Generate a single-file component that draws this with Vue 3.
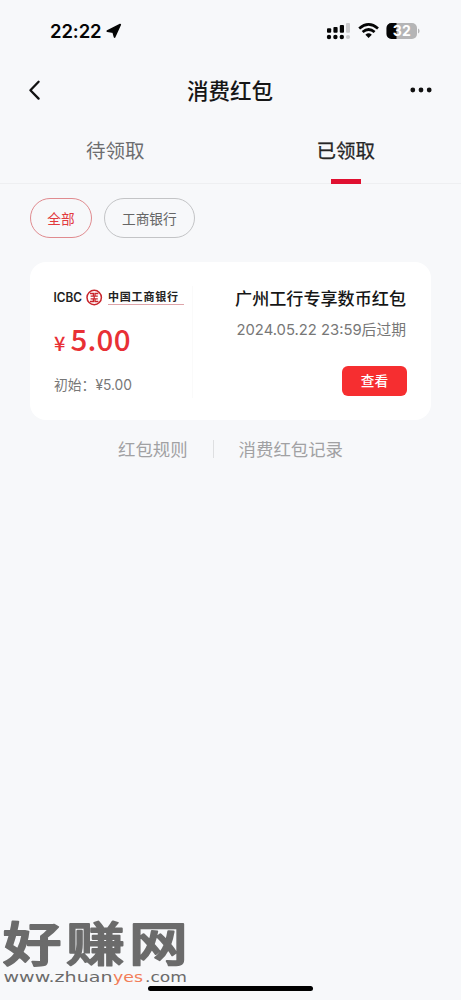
<script setup>
import { ref } from 'vue'

const tabs = ['待领取', '已领取']
const activeTab = ref(1)
const filters = ['全部', '工商银行']
const activeFilter = ref(0)
</script>

<template>
  <main class="screen">
    <header class="status">
      <span class="time">22:22</span>
      <svg class="arrow" width="16" height="16" viewBox="0 0 16 16">
        <path d="M14.2 1.6 8.6 14 7.2 9.1 1.4 8.1Z" fill="#050505" stroke="#050505" stroke-width="1.8" stroke-linejoin="round" />
      </svg>
      <svg class="indicators" width="94" height="18" viewBox="0 0 94 18">
        <g fill="#050505">
          <rect x="1" y="6.2" width="4.2" height="4.6" rx="1" />
          <rect x="7.4" y="4.9" width="4.2" height="5.9" rx="1" />
          <rect x="13.8" y="3" width="4.2" height="7.8" rx="1" />
          <circle cx="3" cy="15" r="2.2" />
          <circle cx="9.4" cy="15" r="2.2" />
          <circle cx="15.8" cy="15" r="2.2" />
        </g>
        <g fill="#cbcbcd">
          <rect x="20" y="1" width="4" height="9.8" rx="1" />
          <circle cx="22" cy="15" r="2.1" />
        </g>
        <g fill="none" stroke="#050505" stroke-width="2.7">
          <path d="M33.2 6.5Q42.6 -1.6 52 6.5" />
          <path d="M36.6 10.1Q42.6 4.9 48.6 10.1" />
        </g>
        <path d="M39.4 12.7Q42.6 9.8 45.8 12.7L42.6 16Z" fill="#050505" />
        <rect x="60.5" y="1" width="30.5" height="16" rx="5" fill="#b5b5b6" />
        <path d="M70.5 1H65.5A5 5 0 0 0 60.5 6V12A5 5 0 0 0 65.5 17H70.5Z" fill="#050505" />
        <path d="M92 6.5Q93.6 7.4 93.6 9T92 11.5Z" fill="#b5b5b6" />
        <text x="75.8" y="14" text-anchor="middle" class="battery">32</text>
      </svg>
    </header>

    <nav class="nav">
      <svg width="14" height="22" viewBox="0 0 14 22">
        <path d="M11.6 2.8 3.4 11.2 11.6 19.6" fill="none" stroke="#111" stroke-width="2.3" stroke-linecap="round" stroke-linejoin="round" />
      </svg>
      <h1>消费红包</h1>
      <svg width="24" height="6" viewBox="0 0 24 6" fill="#111">
        <circle cx="3.8" cy="3" r="2.4" /><circle cx="12" cy="3" r="2.4" /><circle cx="20.2" cy="3" r="2.4" />
      </svg>
    </nav>

    <div class="tabs">
      <div v-for="(tab, i) in tabs" :key="tab" class="tab" :class="{ active: i === activeTab }" @click="activeTab = i">
        {{ tab }}
      </div>
    </div>

    <div class="filters">
      <button v-for="(item, i) in filters" :key="item" :class="{ active: i === activeFilter }" @click="activeFilter = i">
        {{ item }}
      </button>
    </div>

    <section class="card">
      <div class="amount">
        <svg class="bank" width="134" height="20" viewBox="0 0 134 20">
          <text x="0.5" y="15.8" class="icbc" textLength="28.5" lengthAdjust="spacingAndGlyphs">ICBC</text>
          <g fill="none" stroke="#c9252c">
            <circle cx="41.2" cy="11.5" r="7.2" stroke-width="1.5" />
            <path d="M37 7.5H40.4V10.2H37.6M45.4 7.5H42V10.2H44.8M37 15.5H40.4V12.8H37.6M45.4 15.5H42V12.8H44.8M41.2 9.8V13.2" stroke-width="1.3" />
          </g>
          <text x="55" y="15.3" class="bankname" textLength="70" lengthAdjust="spacing">中国工商银行</text>
          <path d="M55 18.5H131" stroke="#dda4a9" stroke-width="1" />
        </svg>
        <div class="price"><span>¥</span>5.00</div>
        <div class="initial">初始：<span>¥5.00</span></div>
      </div>
      <div class="detail">
        <h2>广州工行专享数币红包</h2>
        <p><span>2024.05.22 23:59</span>后过期</p>
        <button>查看</button>
      </div>
    </section>

    <div class="links"><span>红包规则</span><i></i><span>消费红包记录</span></div>

    <div class="watermark">
      <svg width="190" height="60" viewBox="0 0 190 60">
        <text transform="translate(0 51) scale(1.25 1)" x="2.2 52.8 103.2" y="0" class="wm-name">好赚网</text>
      </svg>
      <svg width="190" height="18" viewBox="0 0 190 18">
        <text y="12" class="wm-url"><tspan x="3.5" textLength="109" lengthAdjust="spacingAndGlyphs">www.zhuan</tspan><tspan x="113" class="orange" textLength="30" lengthAdjust="spacingAndGlyphs">yes</tspan><tspan x="145" textLength="42" lengthAdjust="spacingAndGlyphs">.com</tspan></text>
      </svg>
    </div>
    <div class="home"></div>
  </main>
</template>

<style>
body { margin: 0; background: #f7f8fa; }
</style>

<style scoped>
* { box-sizing: border-box; }
.screen {
  position: relative;
  width: 461px;
  height: 1000px;
  overflow: hidden;
  background: #f7f8fa;
  color: #161616;
  font-family: "Noto Sans CJK SC", sans-serif;
}
h1, h2, p { margin: 0; }
button { padding: 0; font-family: inherit; }
.status {
  display: flex;
  align-items: center;
  height: 62px;
  padding: 0 41px 0 50px;
}
.time { width: 53px; font: 600 18.5px/24px Inter, sans-serif; letter-spacing: -0.1px; color: #050505; }
.arrow { margin-left: 3px; }
.indicators { margin-left: auto; }
.battery { font: 700 14px Inter, sans-serif; fill: #fff; }
.nav {
  display: grid;
  grid-template-columns: 60px 1fr 60px;
  align-items: center;
  height: 56px;
  padding: 0 28px 0 27px;
}
.nav h1 { font-size: 21.5px; line-height: 30px; font-weight: 500; text-align: center; }
.nav svg:last-child { justify-self: end; }
.tabs { display: flex; height: 66px; border-bottom: 1px solid #eeeff1; }
.tab {
  position: relative;
  flex: 1;
  line-height: 64px;
  text-align: center;
  font-size: 19.5px;
  color: #6d6d6f;
}
.tab.active { color: #262626; -webkit-text-stroke: 0.25px #262626; }
.tab.active::after {
  content: "";
  position: absolute;
  left: 50%;
  bottom: -1px;
  width: 30px;
  height: 5px;
  margin-left: -15px;
  background: #e01030;
}
.filters { display: flex; gap: 12px; padding: 14px 30px 0; }
.filters button {
  height: 40px;
  padding: 0 17px 1px;
  border: 1px solid #c3c4c6;
  border-radius: 20px;
  background: transparent;
  color: #666;
  font-size: 13.7px;
}
.filters .active { padding: 0 16.3px 1px; border-color: #e08b8f; color: #e23a3e; }
.card {
  display: flex;
  height: 158px;
  margin: 24px 30px 0;
  padding: 24px 24px 0 23px;
  border-radius: 16px;
  background: #fff;
}
.amount { width: 140px; height: 112px; border-right: 1px solid #fafafa; }
.bank { display: block; }
.icbc { font: 600 12.5px Inter, sans-serif; fill: #222; }
.bankname { font: 700 11px "Noto Sans CJK SC", sans-serif; fill: #222; }
.price { margin-top: 11px; padding-left: 1px; font: 500 29.5px/42px "Noto Sans CJK SC", sans-serif; letter-spacing: 0.2px; color: #e83035; }
.price span { margin-right: 5px; font-size: 20px; }
.initial { margin-top: 9px; padding-left: 1px; font-size: 13.8px; line-height: 22px; color: #777; }
.initial span { font-family: Inter, sans-serif; }
.detail { flex: 1; display: flex; flex-direction: column; align-items: flex-end; }
.detail h2 { margin-right: 1px; font-size: 17.1px; line-height: 24px; font-weight: 500; white-space: nowrap; }
.detail p { margin: 7px 1px 0 0; font-size: 14.8px; line-height: 24px; color: #777; white-space: nowrap; }
.detail p span { font-family: Inter, sans-serif; }
.detail button {
  width: 65px;
  height: 30px;
  margin-top: 24px;
  padding-bottom: 2px;
  border: 0;
  border-radius: 6px;
  background: #f62e30;
  color: #fff;
  font-size: 13.7px;
  font-weight: 500;
}
.links {
  display: flex;
  align-items: center;
  justify-content: center;
  height: 57px;
  color: #a1a1a3;
  font-size: 17.4px;
}
.links i { width: 1px; height: 18px; margin: 0 25px; background: #dedfe1; }
.watermark { position: absolute; left: 0; top: 910px; display: flex; flex-direction: column; }
.watermark svg { display: block; overflow: visible; }
.wm-name { font: 500 47px "Noto Sans CJK SC", sans-serif; fill: #6b6b6b; stroke: #6b6b6b; stroke-width: 1.8; stroke-linejoin: round; }
.wm-url { font: 400 13.5px "DejaVu Sans", sans-serif; fill: #6b6b6b; }
.orange { fill: #f27d58; }
.home {
  position: absolute;
  left: 148px;
  top: 986px;
  width: 165px;
  height: 5px;
  border-radius: 3px;
  background: #000;
}
</style>
